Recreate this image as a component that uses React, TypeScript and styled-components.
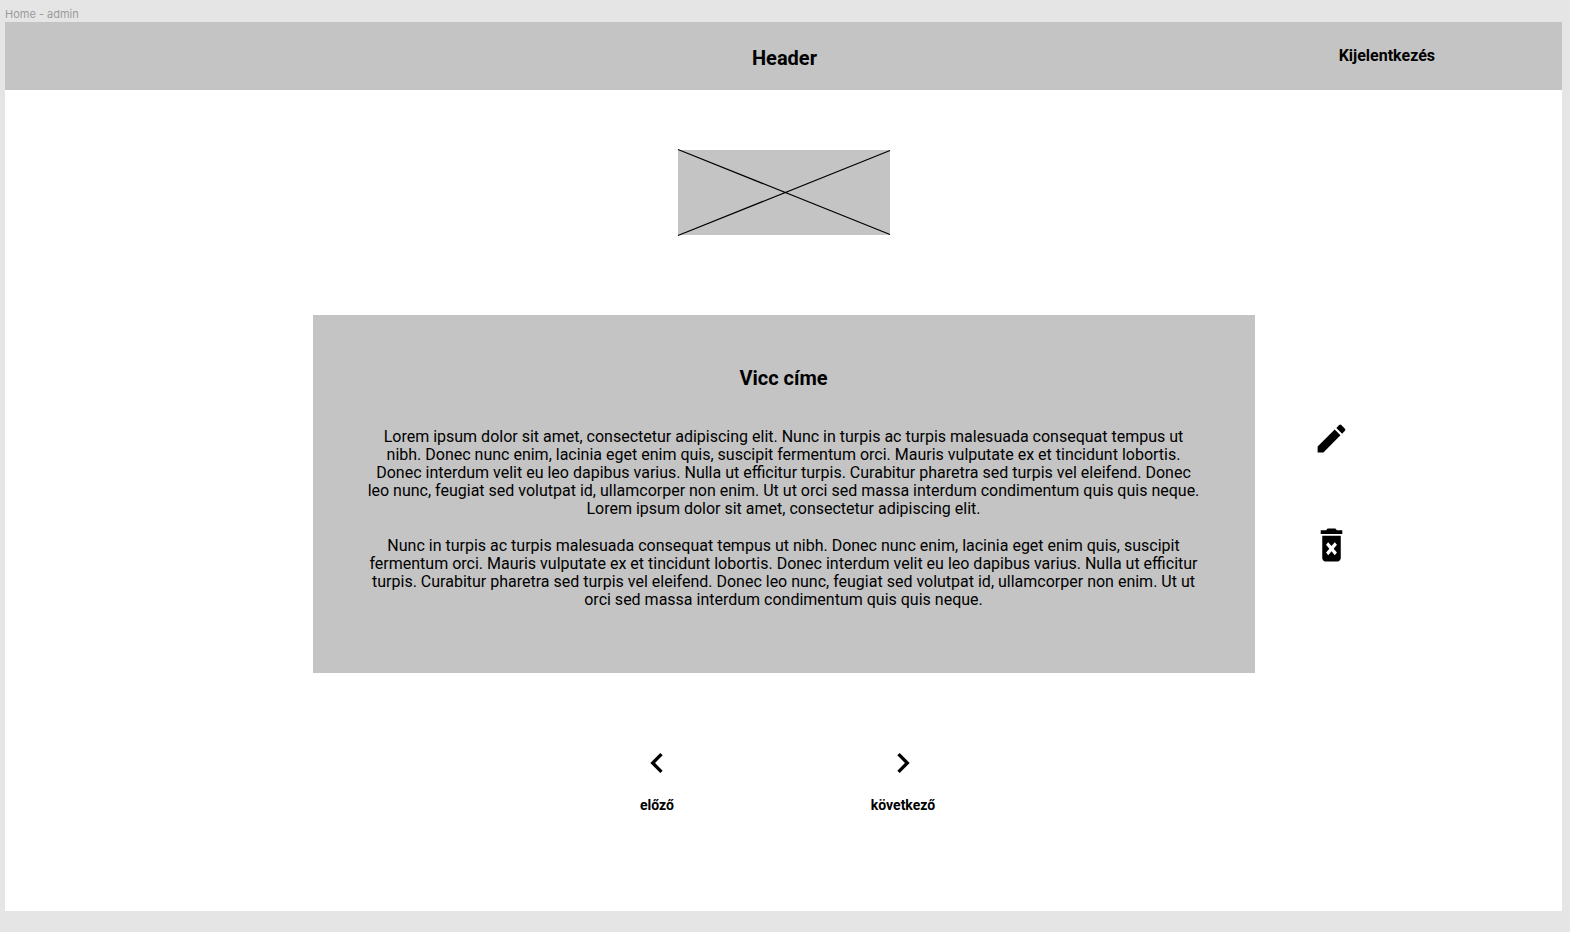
import React from "react";
import styled, { createGlobalStyle } from "styled-components";

const GlobalStyle = createGlobalStyle`
  *, *::before, *::after { box-sizing: border-box; }
  body {
    margin: 0;
    background: #e5e5e5;
    color: #000;
    font-family: Roboto, "Liberation Sans", sans-serif;
  }
`;

const Canvas = styled.div`
  display: flex;
  flex-direction: column;
  min-height: 100vh;
  padding: 6px 8px 21px 5px;
`;

const FrameLabel = styled.div`
  height: 16px;
  font: 400 11px/16px Inter, sans-serif;
  color: #9b9b9b;
`;

const Frame = styled.div`
  display: flex;
  flex: 1;
  flex-direction: column;
  background: #fff;
`;

const TopBar = styled.header`
  display: grid;
  grid-template-columns: 1fr auto 1fr;
  align-items: center;
  height: 68px;
  background: #c4c4c4;
`;

const BarTitle = styled.h1`
  grid-column: 2;
  margin: 0;
  padding: 4px 0 0 2px;
  font-size: 20px;
  line-height: 24px;
  font-weight: 700;
`;

const LogoutLink = styled.a`
  justify-self: end;
  margin-right: 127px;
  font-size: 16px;
  line-height: 20px;
  font-weight: 700;
  color: inherit;
  text-decoration: none;
`;

const Content = styled.main`
  display: flex;
  flex-direction: column;
  align-items: center;
  padding-top: 60px;
`;

const Placeholder = styled.svg`
  display: block;
  width: 212px;
  height: 85px;
  background: #c4c4c4;
  overflow: visible;
`;

const JokeRow = styled.div`
  display: grid;
  grid-template-columns: 1fr minmax(0, 942px) 1fr;
  align-items: start;
  width: 100%;
  margin-top: 80px;
`;

const JokeCard = styled.article`
  grid-column: 2;
  min-height: 358px;
  padding: 51px 54px;
  background: #c4c4c4;
  text-align: center;
`;

const JokeTitle = styled.h2`
  margin: 0 0 38px;
  font-size: 20px;
  line-height: 24px;
  font-weight: 700;
`;

const Paragraph = styled.p`
  margin: 0;
  font-size: 16px;
  line-height: 18px;

  & + & {
    margin-top: 19px;
  }
`;

const Actions = styled.div`
  display: flex;
  flex-direction: column;
  align-items: flex-start;
  gap: 66px;
  padding: 105px 0 0 58px;
`;

const IconButton = styled.button`
  display: block;
  padding: 0;
  border: 0;
  background: none;
  color: inherit;
  cursor: pointer;
`;

const Icon = styled.svg<{ $w: number; $h: number }>`
  display: block;
  width: ${(p) => p.$w}px;
  height: ${(p) => p.$h}px;
  fill: currentColor;
`;

const Pager = styled.nav`
  display: flex;
  justify-content: center;
  gap: 180px;
  margin-top: 70px;
  padding-right: 7px;
`;

const PagerButton = styled(IconButton)`
  display: flex;
  flex-direction: column;
  align-items: center;
  gap: 14px;
  width: 66px;
  font: 700 14px/16px Roboto, "Liberation Sans", sans-serif;
`;

export default function App() {
  return (
    <Canvas>
      <GlobalStyle />
      <FrameLabel>Home - admin</FrameLabel>
      <Frame>
        <TopBar>
          <BarTitle>Header</BarTitle>
          <LogoutLink href="#">Kijelentkezés</LogoutLink>
        </TopBar>
        <Content>
          <Placeholder viewBox="0 0 212 85" aria-hidden="true">
            <path d="M0 -0.5L212 84.5M0 85.5L212 0.5" stroke="#000" strokeWidth="1.2" />
          </Placeholder>
          <JokeRow>
            <JokeCard>
              <JokeTitle>Vicc címe</JokeTitle>
              <Paragraph>
                Lorem ipsum dolor sit amet, consectetur adipiscing elit. Nunc in turpis ac turpis
                malesuada consequat tempus ut nibh. Donec nunc enim, lacinia eget enim quis,
                suscipit fermentum orci. Mauris vulputate ex et tincidunt lobortis. Donec interdum
                velit eu leo dapibus varius. Nulla ut efficitur turpis. Curabitur pharetra sed
                turpis vel eleifend. Donec leo nunc, feugiat sed volutpat id, ullamcorper non enim.
                Ut ut orci sed massa interdum condimentum quis quis neque. Lorem ipsum dolor sit
                amet, consectetur adipiscing elit.
              </Paragraph>
              <Paragraph>
                Nunc in turpis ac turpis malesuada consequat tempus ut nibh. Donec nunc enim,
                lacinia eget enim quis, suscipit fermentum orci. Mauris vulputate ex et tincidunt
                lobortis. Donec interdum velit eu leo dapibus varius. Nulla ut efficitur turpis.
                Curabitur pharetra sed turpis vel eleifend. Donec leo nunc, feugiat sed volutpat id,
                ullamcorper non enim. Ut ut orci sed massa interdum condimentum quis quis neque.
              </Paragraph>
            </JokeCard>
            <Actions>
              <IconButton type="button" aria-label="Szerkesztés">
                <Icon $w={37} $h={37} viewBox="0 0 24 24">
                  <path d="M3 17.25V21h3.75L17.81 9.94l-3.75-3.75L3 17.25zM20.71 7.04a1 1 0 0 0 0-1.41l-2.34-2.34a1 1 0 0 0-1.41 0l-1.83 1.83 3.75 3.75 1.83-1.83z" />
                </Icon>
              </IconButton>
              <IconButton type="button" aria-label="Törlés">
                <Icon $w={37} $h={44} viewBox="0 0 24 24" preserveAspectRatio="none">
                  <path d="M6 19c0 1.100.9 2 2 2h8c1.100 0 2-.9 2-2V7H6v12zm2.460-7.120l1.410-1.410L12 12.590l2.120-2.120 1.410 1.410L13.410 14l2.120 2.120-1.410 1.410L12 15.410l-2.120 2.120-1.410-1.410L10.590 14l-2.130-2.120zM15.500 4l-1-1h-5l-1 1H5v2h14V4z" />
                </Icon>
              </IconButton>
            </Actions>
          </JokeRow>
          <Pager>
            <PagerButton type="button">
              <Icon $w={40} $h={40} viewBox="0 0 24 24">
                <path d="M15.410 7.410L14 6l-6 6 6 6 1.410-1.410L10.830 12z" />
              </Icon>
              előző
            </PagerButton>
            <PagerButton type="button">
              <Icon $w={40} $h={40} viewBox="0 0 24 24">
                <path d="M10 6L8.590 7.410 13.170 12l-4.580 4.590L10 18l6-6z" />
              </Icon>
              következő
            </PagerButton>
          </Pager>
        </Content>
      </Frame>
    </Canvas>
  );
}
